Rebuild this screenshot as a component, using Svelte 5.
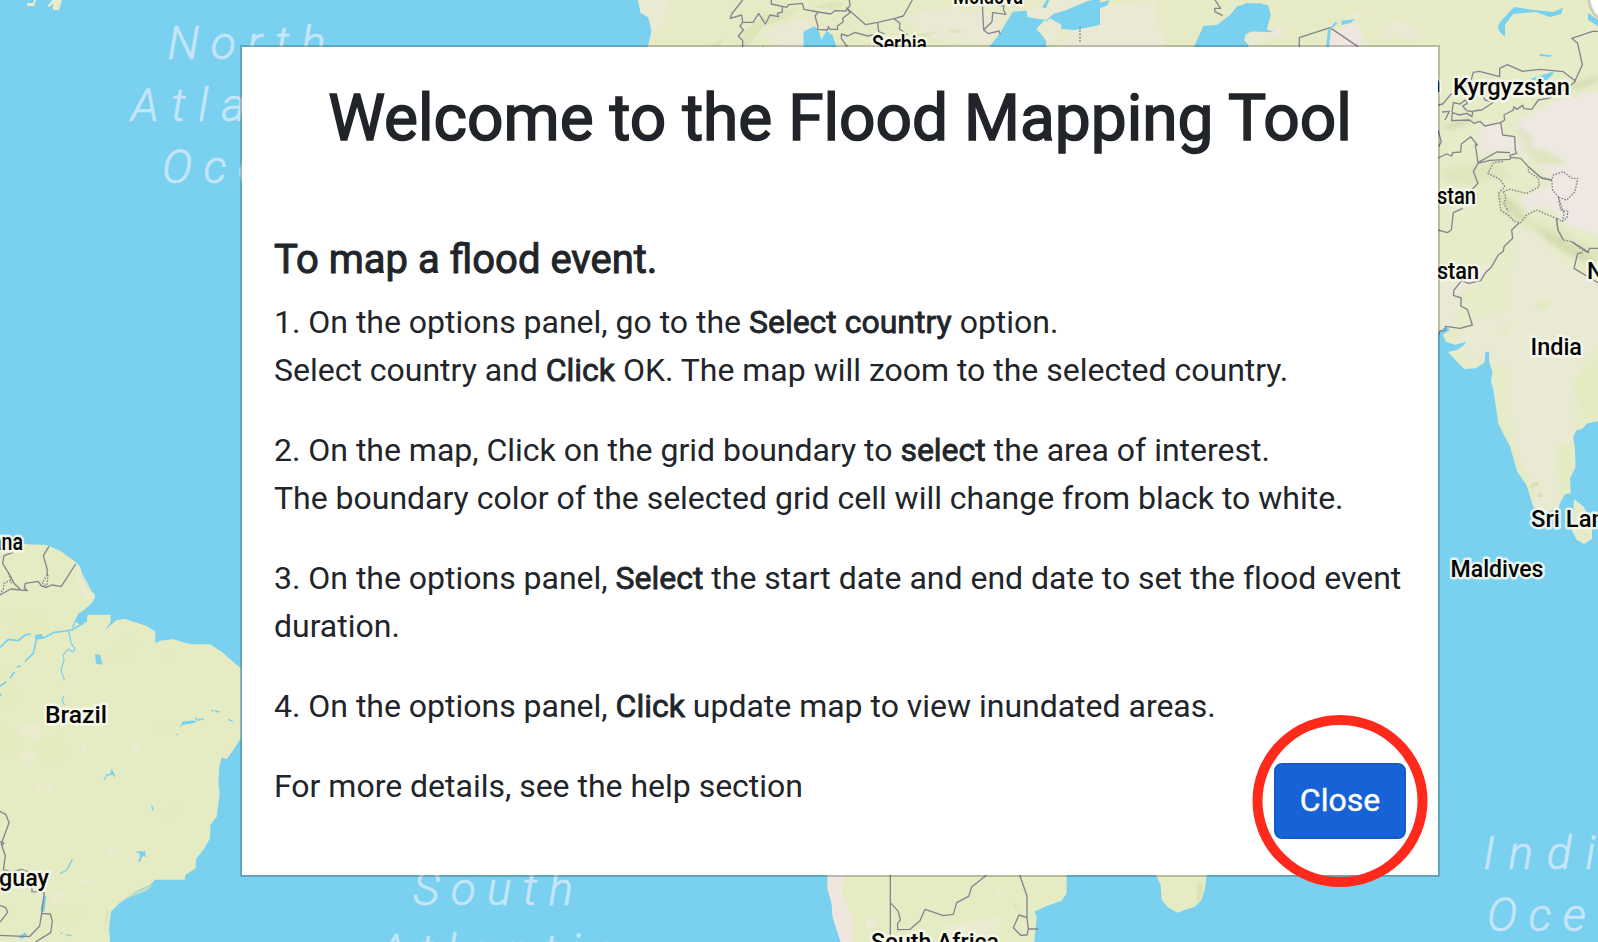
<script>
  const labels = [
    { t: 'Moldova', x: 953, y: 3.5, w: 70 },
    { t: 'Serbia', x: 872, y: 52, w: 55 },
    { t: 'Kyrgyzstan', x: 1453, y: 94.5, w: 117 },
    { t: 'stan', x: 1437, y: 204, w: 39 },
    { t: 'stan', x: 1437, y: 279, w: 42 },
    { t: 'Nepal', x: 1587, y: 279, w: 60 },
    { t: 'India', x: 1530.5, y: 354.5, w: 51.5 },
    { t: 'Sri Lanka', x: 1531, y: 527, w: 99 },
    { t: 'Maldives', x: 1450.5, y: 577, w: 93 },
    { t: 'ana', x: -9, y: 550, w: 32 },
    { t: 'Brazil', x: 45, y: 723, w: 62 },
    { t: 'guay', x: -1, y: 886, w: 50 },
    { t: 'South Africa', x: 871, y: 950, w: 128 }
  ];
  const seas = [
    { t: 'North', x: 167.5, y: 58.5, w: 158 },
    { t: 'Atlantic', x: 131, y: 120.5, w: 237 },
    { t: 'Ocean', x: 162, y: 183, w: 170 },
    { t: 'South', x: 413, y: 905, w: 160 },
    { t: 'Atlantic', x: 379, y: 967, w: 237 },
    { t: 'Indian', x: 1483, y: 869, w: 188 },
    { t: 'Ocean', x: 1487, y: 931, w: 170 }
  ];
</script>

<main class="stage">
  <svg class="map" viewBox="0 0 1598 942" width="1598" height="942" aria-hidden="true">
    <defs>
      <filter id="soft" x="-20%" y="-20%" width="140%" height="140%"><feGaussianBlur stdDeviation="7" /></filter>
      <clipPath id="asia">
        <path d="M-30-180H504V1084L472 1090 455 1108 440 1110 429 1130 434 1160 437 1220 420 1255 422 1300 405 1303 392 1325 385 1345 340 1360 310 1340 290 1275 262 1235 240 1158 222 1125 205 1090 195 1020 189 985 183 965 187 935 178 905V875H166L163 908 138 925 102 927 54 876 80 870 100 858 110 844 76 854 48 846 38 824 60 810 50 800 40 803 24 823H-30z" />
      </clipPath>
    </defs>
    <rect width="1598" height="942" fill="#79d0ef" />

    <!-- Greenland tip -->
    <path fill="#e9ebcb" d="M27 3h6l1-3h2l-2 6h-7zM47 7l5-7h10l-3 10h-6V4l-4 3z" />

    <!-- Europe and Central Asia -->
    <g transform="translate(600 0) scale(.33333)">
      <path fill="#e6ebc6" d="M114 0L122 38 145 52 155 92 148 141H610V95L640 76 656 92 664 120 680 92 697 105 710 141H1168L1200 100 1238 35 1300 30 1290 48 1340 55 1310 85 1340 125 1338 141H1375L1402 110 1425 90 1460 85 1500 75V141H1782L1812 78 1850 76 1890 45 1912 18 1980 10 2010 32 2000 92 2020 96 1940 94 1932 120 1944 135V141H3000V0z" />
      <path fill="#eaead4" d="M114 0h86l-5 70-35 30-12 41h-5l12-49-10-40-23-14zM480 95l120-35 50 15-40 20v46h-75zM920 50l50 55 100 25h100l60-95-60 6-100-20-80 10zM1410 95l90-50h165l30 80v16h-330zM1450 30l216-30v45l-150 10z" />
      <path fill="#efe7df" d="M2180 141l20-46 60-25 20 12 10 35-10 24zM2015 98l15-16 20 5-5 20-20 5z" />
      <path fill="#eaead4" d="M1940 115l20-18 50 0 10 18-25 10h-20l-10 16h-15zM2235 50l50-20 5 15-30 15zM2350 80l40-20 70 25 15 30-50 5-35-20-30 25z" />
      <path fill="#dce2b6" opacity=".7" d="M430 95l60-50 100-20-20 25-80 30-50 60h-15zM310 141l60-25-10 25zM645 22l50-18 40 4-30 24zM930 104l90-12-40 20zM1040 85l60 10-40 8z" />
      <path fill="#79d0ef" d="M1285 45l55-25 60-8 80-12h20v75l-75 15-60-5-30-25-45-5z" />
      <path fill="#eaead4" d="M1280 30l50-20 20-10h120l-70 30-40 12-20 18-30-4-28-6zM1310 90l40-35 35 20-10 40-35 20-4-25z" />
      <path fill="#79d0ef" d="M1326 22l14-22h8l-10 24zM1500 8l28-8-5 15-23 10z" />
      <path class="line" stroke-dasharray="6 4" d="M1440 80V125" />
      <path class="line" d="M428 0L395 42 391 55 425 45 428 67H459L476 40 496 72 510 45 535 50 532 40 547 36V20M514 0V12L560 22 566 14 607 10 612 28 655 36 692 42 705 32 737 33 750 16 748 0M428 67L420 78 430 90 415 108 428 122V141M655 36L645 48 654 80 652 88 682 90 685 80 690 88H713L712 78 730 65 728 55 750 38 740 24 797 74 833 67 882 56 910 48 937 0M833 67L836 95 854 102M882 56L900 70 898 86 922 104M742 141L724 115V102L743 108 765 97 803 108 820 104M1147 10L1151 90 1165 101 1197 93 1201 104M1151 90L1176 65 1178 38 1218 43 1210 30 1212 18 1190 15M1845 0L1862 25H1844L1845 35 1868 47M2098 141V113L2190 83 2274 140" />
      <path fill="#79d0ef" d="M1782 141l10-22 18-40 42-3 35-28 15-2 5-20 32-17 45 2 20 5 8 30-12 42 20 8-62-4-24 12-4 18 15 14v5zM2178 141l6-50 22-25 7 4-20 18-6 53zM2225 62l40-4-12 10-28 7z" />
      <path fill="#79d0ef" d="M486 138h5v3h-5z" />
    </g>

    <!-- South Asia -->
    <g transform="translate(1430 60) scale(.33333)">
      <g clip-path="url(#asia)">
        <rect x="-30" y="-180" width="540" height="1560" fill="#e6ebc8" />
        <g filter="url(#soft)">
          <path fill="#efe8e2" d="M150 200l60-10 10 35 35 10 8 40-60-5-55 15zM250 190l60-30 80-45 130-20V530l-50-15-60-20-30-40-20-10-50-5-30 30-5-60 60-20 40-20-55-60-40-20z" />
          <path fill="#dfe6bd" d="M275 260l60 5 80 45-30 5-70-5zM255 190l45 60 5 30-45-60zM30 330l170-30 50 60-60-5-80 20-60-10zM205 390l60 35 50 60 80 20 70 50 50 10v60l-60-20-80-40-90-70-70-30zM380 90l124-50v20l-120 50z" />
          <path fill="#cfd7ac" opacity=".7" d="M320 500l80 40 80 50 30 15-5 15-70-30-80-50zM200 395l50 35 40 50-30-5-45-50zM430 75l75-25v12l-70 28zM260 190l40 35 10 30zM30 200l80-25 30 5-80 30z" />
          <path fill="#eaead4" d="M260 500l60 20 60 60 60 50 80 30v180l-70 80-20 110 10 100-40 80-20 130-60 20-40-100-30-120-20-230-100-10-60-60 60-60 100-30zM24 640l60-10 20 40-20 50-10 80-50 10z" />
          <path fill="#f0e8e0" d="M75 680l40-35 60-40 5 15-30 40-40 20-30 15z" />
          <path fill="#e3eac0" d="M430 960l74-60v160l-30 5-35-50zM320 725l30-12 15 20-20 20-25-5zM210 800l20-5 10 15-15 15zM195 1000l15 90 60 110 50 110h-20l-60-140-60-110zM380 1150l40 0v110l-30 50z" />
        </g>
        <path fill="#d8dfb5" d="M305 1270l22-7v12l-25 10zM320 1310l12-14 6 16z" />
      </g>
    </g>
    <path fill="#e6ebca" d="M1574 499l10 8 8 20v12l-8 5-7-4-5-9z" />
    <path fill="#dce2b6" d="M1584 535l4-3-2 5z" />
    <path fill="#79d0ef" d="M1530 79l22-7 2 1-7 7-10 2zM1498 26l2-4 14-15 20 3 19 2 10-4-2 6-11 3-14-5-23 2-8 11v12l-6-6zM1539 54l13 1-2 2-10-1zM1588 13l10 7v6l-10-6z" />
    <g transform="translate(1420 0) scale(.33333)">
      <path class="line" d="M534 94L518 94 455 115 473 130 487 195 465 242 430 215 360 208 308 214 262 194 239 205V230L178 214 160 217 152 245M54 315L68 312 95 280M468 242L450 258 385 295 355 300 335 328 312 326 308 316 290 328 282 320 280 330 252 345 254 360 242 368 194 378 180 364 162 370 148 360 95 362 97 338 118 345 140 340 156 350 158 335 140 332 128 318 142 310 136 300 120 312 100 308 96 336M66 336L88 334 75 360M222 306L185 330 160 333M188 285L195 300 215 304M242 368L248 405 284 410 286 450 290 460 270 466 272 472 M270 458L230 456 174 488 166 435 172 435 152 410 124 432 122 456 98 458 95 468 80 462 54 474M54 390L64 425 56 440M172 490L210 481 270 478 272 472 302 475 325 500 365 535 395 540M174 490L160 514 174 550 145 580M128 625L100 638 94 690 82 698 54 690M298 668L275 690 278 715 252 740 250 754 234 766 215 800 195 820 182 842 146 850 125 842 102 870 100 886 124 894 122 918 142 928 157 975 120 985 77 979 75 991 60 993 55 1005M410 655L414 690 430 720M455 725L508 758M534 745H508L504 758 490 750M488 758L473 760 462 805 534 848" />
      <path class="line" stroke-dasharray="5 4" d="M248 485L220 488 204 520 240 538 254 560 236 580 242 630 270 650 282 664 302 668 320 645 350 630 408 655 414 690 430 720 455 725 490 752M250 575L270 568 320 580 358 560 355 535 325 515V500L360 530 395 540 400 525 430 515 455 535 473 535 465 575 440 600 415 592 422 630 444 635 440 655 425 665 412 655M418 600L432 640 428 665M395 540L398 570 416 592M250 575L258 590 252 610 265 635" />
    </g>

    <!-- South America -->
    <g transform="translate(0 520) scale(.33333)">
      <path fill="#e5ecc4" d="M0 42L40 65 80 73 140 75 180 92 222 122 241 140 247 178 270 212 284 222 284 237 265 260 245 285 265 284H332V305L315 330 350 300 375 297 440 318 466 335V370L480 362 520 358 570 373H630L665 395 722 445V655L700 690 680 718 665 712 658 740 655 790 659 820 650 890 631 915 630 955 610 990 589 1015 587 1045 556 1065 554 1079H465L450 1095 410 1112 360 1148 333 1175 327 1225 330 1266H0z" />
      <g fill="#e1e9ba" opacity=".5"><path d="M15 265L130 270 145 330 40 360zM380 350l30 15-10 40-30 10-40-5zM480 605l25 5-10 35h-18zM490 385l20 15-5 30-15-10zM500 900l15-60 25 3-15 55zM115 660l70-15 10 50-20 35-65-5zM150 1160l95 5-10 45-90-15zM0 620l50 20 10 50-60 30zM0 450l70 80-70 35z" /></g>
      <g fill="#e9ebcf" opacity=".75"><path d="M230 128l35 65 20 40-25 10-30-50zM55 610l70 5v45l-70-10zM245 665l20 5-8 30h-12zM400 665l22-8-5 55-18-10zM315 990l40-15v45l-30-8zM240 1080l35-8v15l-35 10zM155 1120l40-5 10 30-50 5zM110 790l50-10-5 35-50-3zM60 700l40-15 5 40-30 25z" /></g>
      <path fill="#dbe3b5" opacity=".7" d="M360 1145l45-30 55-22-20 20-55 20zM313 1210l6-45 10 6-8 40z" />
      <g fill="none" stroke="#79d0ef" stroke-width="5" stroke-linejoin="bevel">
        <path d="M0 382L25 358 55 362 75 345 92 342M105 355L135 352 160 338 215 330 250 310" />
        <path d="M110 355L100 400 75 424M62 437L50 442M44 455L30 475M20 485L0 498" />
        <path d="M205 330L214 370 225 388 218 396 204 387 190 405 192 420 183 450 193 480M190 528L187 542 194 556" stroke-width="3.5" />
        <path d="M218 322L235 285 270 258 300 278M248 310L256 285 240 290M262 270L290 268M528 645l5-3M541 620L552 608 590 604M585 593L592 600 611 597M633 572h8M645 573l14 3M685 598l13 6M455 856l5 16M181 1060L200 1050 217 1018M181 1240h6M197 1244l18 3" stroke-width="4" />
      </g>
      <path fill="#79d0ef" d="M105 346l20-5 6 15-25 3zM285 403l15 1 6 22 2 8-20-3zM236 280l14-5 15-10-5 40-20 10-12-10zM310 775l7-3v-8l13-3 5-14 10 18v8l-7-9-18 4-5 13zM410 992l10 4 3-6 4 6 9-4v14l6 5-13-3-4 6-4 10-9 2 8-14-2-12-8-2zM123 1160l8-35 8 5-6 45h-10zM55 1252l20-15 8 10-18 9zM545 606l35-5 5 8-35 5zM0 520l6 5-6 5z" />
      <path class="line" d="M38 98L12 107 8 130 32 170 42 190 60 207M147 79L130 107 141 145 142 165M227 132L184 199 155 195 138 202 125 198 114 184 76 190 73 204 82 212 32 207 0 225M0 874L18 884 27 908 4 972 16 1007 10 1050 40 1055 64 1048 90 1058 94 1080 96 1115 133 1118 125 1180 119 1218 88 1250 0 1246M0 965L12 970 4 978M125 1180L151 1182 157 1203 152 1238 106 1266M0 1156L17 1163 23 1177 0 1206" />
      <path class="line" stroke-dasharray="5 4" d="M34 190L26 158M32 180L12 190 10 208 0 220M142 165L127 188 140 202 144 165" />
    </g>

    <!-- Southern Africa and Madagascar -->
    <g transform="translate(800 860) scale(.33333)">
      <path fill="#e5ecc4" d="M82 45L83 85 95 130 98 170 122 246H703L710 170 703 155 740 138 785 122 800 100V45zM1068 45L1082 75 1085 120 1105 143 1133 158 1160 148 1185 140 1205 120 1215 85 1220 45z" />
      <path fill="#efe7df" d="M85 45h45l-5 60 30 60 5 81h-38L98 170 95 130 82 85z" />
      <path fill="#eaebd0" d="M440 195l165-25-10 45-60 31H420zM200 175l30-5-5 30-28 8zM583 80l18 0v20l-15 5z" />
      <path fill="#dce2b6" d="M638 145l5-16 14 12zM1190 70l18-5v45l-10 18h-8z" opacity=".8" />
      <path class="line" d="M271 45V246M271 128L295 154 301 180 293 190V209L330 208 360 182 375 148 430 167 460 163 470 128 506 109 515 81 560 45M659 45L681 108V173L685 207 681 225 662 226 640 203 657 165 681 173M685 207H714" />
    </g>

    <circle cx="1617" cy="-3" r="28" fill="#fff" stroke="#00000026" stroke-width="3" />

    {#each seas as s}
      <text class="sea" x={s.x} y={s.y} textLength={s.w}>{s.t}</text>
    {/each}
    {#each labels as l}
      <text class="place" x={l.x} y={l.y} textLength={l.w} lengthAdjust="spacingAndGlyphs">{l.t}</text>
    {/each}
    <text class="place" x="1427" y="92">n</text>
  </svg>

  <section class="modal" role="dialog" aria-labelledby="title">
    <h1 id="title">Welcome to the Flood Mapping Tool</h1>
    <h2>To map a flood event.</h2>
    <p>1. On the options panel, go to the <b>Select country</b> option.<br />Select country and <b>Click</b> OK. The map will zoom to the selected country.</p>
    <p>2. On the map, Click on the grid boundary to <b>select</b> the area of interest.<br />The boundary color of the selected grid cell will change from black to white.</p>
    <p>3. On the options panel, <b>Select</b> the start date and end date to set the flood event duration.</p>
    <p>4. On the options panel, <b>Click</b> update map to view inundated areas.</p>
    <footer>
      <p>For more details, see the help section</p>
      <div class="action">
        <button type="button">Close</button>
        <svg class="ring" viewBox="0 0 176 174" width="176" height="174" aria-hidden="true">
          <ellipse cx="88" cy="87" rx="82.5" ry="81" />
        </svg>
      </div>
    </footer>
  </section>
</main>

<style>
  :global(body) { margin: 0; overflow: hidden; }
  .stage {
    position: relative;
    display: flex;
    justify-content: center;
    box-sizing: border-box;
    width: 1598px;
    height: 942px;
    padding: 45px 158px 0 240px;
    overflow: hidden;
    font-family: Roboto, sans-serif;
    color: #212529;
  }
  .map { position: absolute; inset: 0; }
  .line { fill: none; stroke: #85858f; stroke-width: 4; stroke-linejoin: round; }
  .place {
    font: 500 24px Roboto, sans-serif;
    fill: #050505;
    stroke: #f8faf0;
    stroke-opacity: .85;
    stroke-width: 5px;
    stroke-linejoin: round;
    paint-order: stroke;
  }
  .sea { font: italic 300 46px Roboto, sans-serif; fill: #c5e5f9; stroke: #c5e5f9; stroke-width: .7px; }
  .modal {
    position: relative;
    box-sizing: border-box;
    width: 1200px;
    height: 832px;
    padding: 33px 32px 0;
    border: 2px solid rgba(0, 0, 0, .2);
    background: #fff;
    background-clip: padding-box;
  }
  h1, h2, p { margin: 0; }
  h1, h2, b { font-weight: 400; -webkit-text-stroke: .8px currentColor; }
  h1 { font-size: 64px; line-height: 77px; text-align: center; -webkit-text-stroke-width: 1.6px; }
  h2 { margin-top: 79px; margin-bottom: 14px; font-size: 40px; line-height: 48px; -webkit-text-stroke-width: 1px; }
  p { margin-bottom: 32px; font-size: 32px; line-height: 48px; letter-spacing: -.012px; }
  footer { display: flex; justify-content: space-between; align-items: flex-start; }
  .action { position: relative; display: flex; margin-top: 1px; }
  button {
    box-sizing: border-box;
    width: 132px;
    height: 76px;
    padding: 0 0 3px;
    border: 2px solid #165bc7;
    border-radius: 8px;
    background: #1762d6;
    color: #fff;
    font: 400 32px/48px Roboto, sans-serif;
    -webkit-text-stroke: .4px #fff;
  }
  .ring { position: absolute; left: -22px; top: -49px; }
  .ring ellipse { fill: none; stroke: #ff2a1c; stroke-width: 10; }
</style>
